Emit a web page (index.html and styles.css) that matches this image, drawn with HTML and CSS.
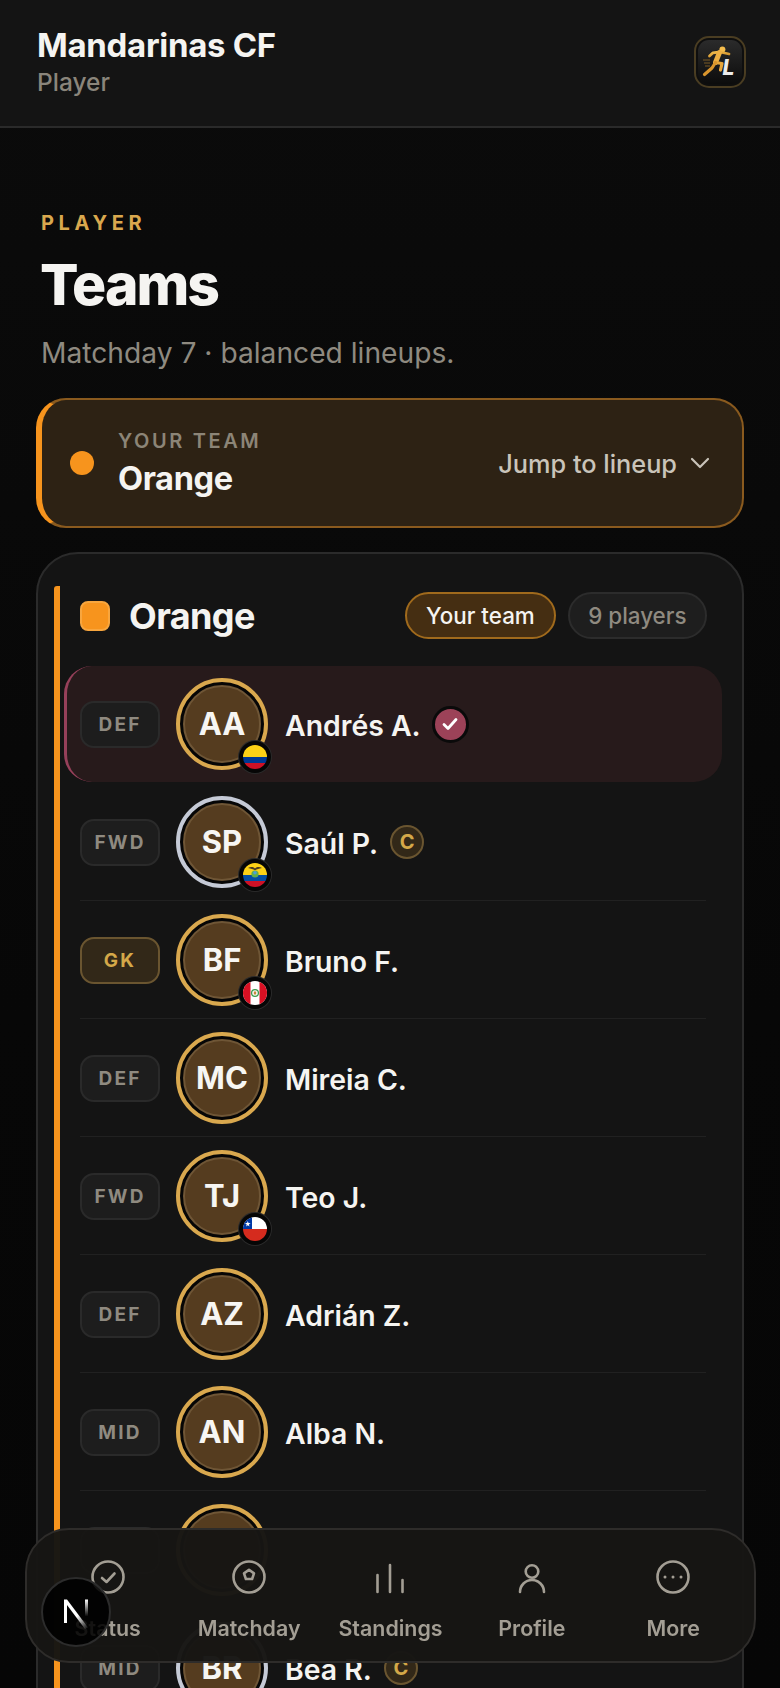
FILE: index.html
```html
<!DOCTYPE html>
<html lang="en">
<head>
  <meta charset="UTF-8" />
  <meta name="viewport" content="width=device-width, initial-scale=1.0"/>
  <title>Mandarinas CF – Teams</title>
  <link rel="stylesheet" href="styles.css">
</head>
<body>

  <header class="topbar">
    <div>
      <div class="club">Mandarinas CF</div>
      <div class="role">Player</div>
    </div>
    <div class="logo">
      <svg width="48" height="48" viewBox="2 2 48 48">
        <defs>
          <linearGradient id="gold" x1="0" y1="0" x2="1" y2="1">
            <stop offset="0" stop-color="#f6c04f"/>
            <stop offset="1" stop-color="#c98a25"/>
          </linearGradient>
          <linearGradient id="plate" x1="0" y1="0" x2="0" y2="1">
            <stop offset="0" stop-color="#2b2b2b"/>
            <stop offset="1" stop-color="#0c0c0c"/>
          </linearGradient>
        </defs>
        <rect x="4" y="4" width="44" height="44" rx="11" fill="url(#plate)"/>
        <circle cx="28.400" cy="13.400" r="3" fill="#f4bc4c"/>
        <path d="M15.500 20 L19 16.800 L26 16 L35 18" fill="none" stroke="url(#gold)" stroke-width="2.800" stroke-linecap="round" stroke-linejoin="round"/>
        <path d="M25.500 16.500 L21.500 26.500" fill="none" stroke="#eeb043" stroke-width="5" stroke-linecap="round"/>
        <path d="M21.500 26.500 L28 27.500 L26.500 34" fill="none" stroke="#e6a53a" stroke-width="3.200" stroke-linecap="round" stroke-linejoin="round"/>
        <path d="M21.500 26.500 L18 32 L10.500 38.500" fill="none" stroke="#d9952d" stroke-width="3.200" stroke-linecap="round" stroke-linejoin="round"/>
        <path d="M9 24h7M10 27h6M11 30h5" stroke="#7a5a24" stroke-width="1"/>
        <text class="logo-l" x="28.600" y="38.600">L</text>
      </svg>
    </div>
  </header>

  <main class="page">
    <div class="intro">
      <div class="eyebrow">PLAYER</div>
      <h1>Teams</h1>
      <p class="lede">Matchday 7 · balanced lineups.</p>
    </div>

    <section class="jump-card">
      <span class="jump-dot"></span>
      <div class="jump-team">
        <div class="jump-label">YOUR TEAM</div>
        <div class="jump-name">Orange</div>
      </div>
      <div class="jump-link">
        Jump to lineup
        <svg width="20" height="12" viewBox="0 0 20 12"><path d="M2 2l8 8 8-8" fill="none" stroke="#c9c4ba" stroke-width="2.200" stroke-linecap="round" stroke-linejoin="round"/></svg>
      </div>
    </section>

    <section class="roster">
      <div class="roster-inner">
        <div class="roster-head">
          <span class="swatch"></span>
          <h2>Orange</h2>
          <span class="pill pill-mine">Your team</span>
          <span class="pill">9 players</span>
        </div>

        <div class="rows">
          <div class="row row-me">
            <span class="pos">DEF</span>
            <div class="avatar"><span class="disc">AA</span>
              <span class="flag">
                <svg viewBox="0 0 24 24"><rect width="24" height="12" fill="#fcd116"/><rect y="12" width="24" height="6" fill="#003893"/><rect y="18" width="24" height="6" fill="#ce1126"/></svg>
              </span>
            </div>
            <span class="name">Andrés A.</span>
            <span class="me-check">
              <svg width="20" height="20" viewBox="0 0 20 20"><path d="M4 10.500l4 4 8-9" fill="none" stroke="#fff" stroke-width="2.800" stroke-linecap="round" stroke-linejoin="round"/></svg>
            </span>
          </div>

          <div class="row">
            <span class="pos">FWD</span>
            <div class="avatar avatar-silver"><span class="disc">SP</span>
              <span class="flag">
                <svg viewBox="0 0 24 24"><rect width="24" height="12" fill="#fcd116"/><rect y="12" width="24" height="6" fill="#034ea2"/><rect y="18" width="24" height="6" fill="#ce1126"/><path d="M5 5c3-1.600 5-1 7 .4 2-1.400 4-2 7-.4-3 .4-5 1.400-7 2.200C10 6.400 8 5.400 5 5z" fill="#4a3a20"/><circle cx="12" cy="11" r="3.600" fill="#5fae4a"/><circle cx="12" cy="9.800" r="1.800" fill="#4aa0d8"/></svg>
              </span>
            </div>
            <span class="name">Saúl P.</span>
            <span class="cap">C</span>
          </div>

          <div class="row">
            <span class="pos pos-gk">GK</span>
            <div class="avatar"><span class="disc">BF</span>
              <span class="flag">
                <svg viewBox="0 0 24 24"><rect width="24" height="24" fill="#fff"/><rect width="7.500" height="24" fill="#d91023"/><rect x="16.500" width="7.500" height="24" fill="#d91023"/><circle cx="12" cy="12" r="3.400" fill="none" stroke="#3c9a4c" stroke-width="1.300"/><rect x="10.800" y="10.500" width="2.400" height="3" fill="#c9893a"/></svg>
              </span>
            </div>
            <span class="name">Bruno F.</span>
          </div>

          <div class="row">
            <span class="pos">DEF</span>
            <div class="avatar"><span class="disc">MC</span></div>
            <span class="name">Mireia C.</span>
          </div>

          <div class="row">
            <span class="pos">FWD</span>
            <div class="avatar"><span class="disc">TJ</span>
              <span class="flag">
                <svg viewBox="0 0 24 24"><rect width="24" height="12" fill="#fff"/><rect y="12" width="24" height="12" fill="#d52b1e"/><rect width="9" height="12" fill="#0039a6"/><path d="M4.800 4l.7 2 2.100.1-1.700 1.300.6 2-1.700-1.200-1.700 1.200.6-2-1.700-1.300 2.100-.1z" fill="#fff"/></svg>
              </span>
            </div>
            <span class="name">Teo J.</span>
          </div>

          <div class="row">
            <span class="pos">DEF</span>
            <div class="avatar"><span class="disc">AZ</span></div>
            <span class="name">Adrián Z.</span>
          </div>

          <div class="row">
            <span class="pos">MID</span>
            <div class="avatar"><span class="disc">AN</span></div>
            <span class="name">Alba N.</span>
          </div>

          <div class="row">
            <span class="pos"></span>
            <div class="avatar"><span class="disc"></span></div>
          </div>

          <div class="row">
            <span class="pos">MID</span>
            <div class="avatar avatar-silver"><span class="disc">BR</span></div>
            <span class="name">Bea R.</span>
            <span class="cap">C</span>
          </div>
        </div>
      </div>
    </section>
  </main>

  <nav class="tabbar">
    <a class="tab">
      <svg class="tab-icon" viewBox="0 0 40 40"><circle cx="20" cy="20" r="15.500"/><path d="M14 21l4.500 4 8-8.500"/></svg>
      <span>Status</span>
    </a>
    <a class="tab">
      <svg class="tab-icon" viewBox="0 0 40 40"><circle cx="20" cy="20" r="15.500"/><path d="M20 12.800l5 3.600-1.900 5.600h-6.200L15 16.400z"/></svg>
      <span>Matchday</span>
    </a>
    <a class="tab">
      <svg class="tab-icon" viewBox="0 0 40 40"><path d="M7.500 18v17M20 8v27M32.500 23v12"/></svg>
      <span>Standings</span>
    </a>
    <a class="tab">
      <svg class="tab-icon" viewBox="0 0 40 40"><circle cx="20" cy="14.500" r="6.300"/><path d="M8 35a12 12 0 0 1 24 0"/></svg>
      <span>Profile</span>
    </a>
    <a class="tab">
      <svg class="tab-icon" viewBox="0 0 40 40"><circle cx="20" cy="20" r="15.500"/><path class="dots" d="M12 20h.01M20 20h.01M28 20h.01"/></svg>
      <span>More</span>
    </a>
  </nav>

  <div class="dev-badge">
    <svg width="36" height="36" viewBox="0 0 36 36">
      <defs>
        <linearGradient id="nfade" x1="0" y1="0" x2="0" y2="1">
          <stop offset="0" stop-color="#fff"/>
          <stop offset="1" stop-color="#fff" stop-opacity="0"/>
        </linearGradient>
        <linearGradient id="ndiag" x1="0" y1="0" x2="1" y2="1">
          <stop offset="0.55" stop-color="#fff"/>
          <stop offset="1" stop-color="#fff" stop-opacity="0"/>
        </linearGradient>
      </defs>
      <path d="M6 5.500h3L30 33.500l-3 1.500L9 11v18H6z" fill="url(#ndiag)"/>
      <rect x="27" y="5.500" width="3" height="17" fill="url(#nfade)"/>
    </svg>
  </div>

</body>
</html>
```

FILE: styles.css
```css
* {
  box-sizing: border-box;
}

html, body {
  margin: 0;
  padding: 0;
  height: 1688px;
  overflow: hidden;
}

body {
  font-family: 'Inter', 'Liberation Sans', sans-serif;
  background: linear-gradient(180deg, #0b0b0b 0%, #070707 60%, #060606 100%);
  color: #f5f4f1;
}

h1, h2, p {
  margin: 0;
}

/* top bar */
.topbar {
  height: 128px;
  padding: 25px 34px 0 37px;
  background: #141414;
  border-bottom: 2px solid #2a2a2a;
  display: flex;
  justify-content: space-between;
}

.club {
  font-size: 33px;
  line-height: 40px;
  font-weight: 700;
  letter-spacing: -0.3px;
}

.role {
  margin-top: 2px;
  font-size: 24.500px;
  line-height: 30px;
  font-weight: 500;
  color: #8a857b;
}

.logo {
  width: 52px;
  height: 52px;
  margin-top: 11px;
  border: 2px solid #4a3d22;
  border-radius: 15px;
  overflow: hidden;
  background: #0e0e0e;
}

.logo-l {
  font-family: 'Inter', sans-serif;
  font-size: 21px;
  font-weight: 800;
  font-style: italic;
  fill: #ececec;
}

/* page */
.page {
  padding: 0 36px;
}

.intro {
  padding: 82px 0 0 5px;
}

.eyebrow {
  font-size: 20px;
  line-height: 26px;
  font-weight: 700;
  letter-spacing: 4.600px;
  color: #d9a84e;
}

h1 {
  margin: 15px 0 0 -1px;
  font-size: 57px;
  line-height: 68px;
  font-weight: 800;
  letter-spacing: -2px;
  color: #f5f4f1;
}

.lede {
  margin-top: 16px;
  font-size: 28.200px;
  line-height: 36px;
  color: #8f8a80;
}

/* your team card */
.jump-card {
  margin-top: 27px;
  height: 130px;
  padding: 0 32px 0 28px;
  display: flex;
  align-items: center;
  background: #2d2214;
  border: 2px solid #8a5a1e;
  border-left: 6px solid #f7941d;
  border-radius: 30px;
}

.jump-dot {
  width: 24px;
  height: 24px;
  border-radius: 50%;
  background: #f7941d;
  flex: none;
}

.jump-team {
  margin-left: 24px;
  flex: 1;
}

.jump-label {
  font-size: 20px;
  line-height: 26px;
  font-weight: 600;
  letter-spacing: 2.600px;
  color: #8c8577;
}

.jump-name {
  margin-top: 4px;
  font-size: 32.600px;
  line-height: 40px;
  font-weight: 700;
  letter-spacing: -0.4px;
}

.jump-link {
  display: flex;
  align-items: center;
  gap: 13px;
  font-size: 25.300px;
  font-weight: 500;
  color: #c9c4ba;
}

/* roster card */
.roster {
  margin-top: 24px;
  padding: 32px 0 0 16px;
  background: #141414;
  border: 2px solid #2b2b2b;
  border-radius: 42px;
  height: 1300px;
}

.roster-inner {
  border-left: 6px solid #f7941d;
  border-top-left-radius: 3px;
  padding: 0 20px 0 4px;
}

.roster-head {
  display: flex;
  align-items: center;
  padding: 7px 15px 0 16px;
  height: 52px;
  margin-bottom: 28px;
}

.swatch {
  width: 30px;
  height: 30px;
  border-radius: 8px;
  background: #f7941d;
  border: 2px solid #f8a63e;
  flex: none;
}

h2 {
  margin-left: 19px;
  flex: 1;
  font-size: 36px;
  line-height: 44px;
  font-weight: 700;
  letter-spacing: -0.6px;
  color: #f5f4f1;
}

.pill {
  height: 47px;
  padding: 0 18.500px;
  margin-left: 12px;
  display: flex;
  align-items: center;
  border-radius: 24px;
  border: 2px solid #2c2c2c;
  background: #1e1e1e;
  font-size: 22.400px;
  font-weight: 500;
  color: #8f8a80;
}

.pill-mine {
  padding: 0 19px;
  background: #452e12;
  border-color: #a06a1c;
  color: #f5f4f1;
}

/* rows */
.rows {
  padding: 0 16px;
}

.row {
  display: flex;
  align-items: center;
  padding: 12px 0;
  margin-bottom: 1px;
  border-bottom: 1px solid #212121;
}

.row-me {
  margin: 0 -16px 2px;
  padding: 12px 16px;
  background: #271a1b;
  border-bottom: none;
  border-left: 3px solid #96405a;
  padding-left: 13px;
  border-radius: 28px;
}

.pos {
  width: 80px;
  height: 47px;
  flex: none;
  display: flex;
  align-items: center;
  justify-content: center;
  border: 2px solid #2a2a2a;
  border-radius: 14px;
  background: #1d1d1d;
  font-size: 19px;
  font-weight: 700;
  letter-spacing: 2.200px;
  color: #8f8a80;
}

.pos-gk {
  background: #322818;
  border-color: #6a5530;
  color: #d4a849;
}

.avatar {
  position: relative;
  width: 92px;
  height: 92px;
  margin-left: 16px;
  flex: none;
  padding: 3px;
  border: 4px solid #d9a84e;
  border-radius: 50%;
  background: #060606;
}

.avatar-silver {
  border-color: #c5cad6;
}

.disc {
  width: 100%;
  height: 100%;
  display: flex;
  align-items: center;
  justify-content: center;
  border-radius: 50%;
  background: #553c1f;
  border: 2px solid #6f5636;
  font-size: 31px;
  font-weight: 700;
  color: #f7f6f3;
  padding-bottom: 2px;
}

.flag {
  position: absolute;
  right: -7px;
  bottom: -7px;
  width: 32px;
  height: 32px;
  border-radius: 50%;
  border: 4px solid #060606;
  box-shadow: 0 0 0 1px #2a2a2a;
  overflow: hidden;
  background: #060606;
}

.flag svg {
  display: block;
  width: 100%;
  height: 100%;
}

.name {
  margin-left: 17px;
  padding-top: 2px;
  font-size: 28.400px;
  font-weight: 600;
  color: #f5f4f1;
}

.cap {
  width: 34px;
  height: 34px;
  margin-left: 12px;
  display: flex;
  align-items: center;
  justify-content: center;
  border-radius: 50%;
  border: 2px solid #6a5530;
  background: #322818;
  font-size: 20px;
  font-weight: 700;
  color: #d4a849;
}

.me-check {
  width: 37px;
  height: 37px;
  margin-left: 11px;
  display: flex;
  align-items: center;
  justify-content: center;
  border-radius: 50%;
  border: 3px solid #0a0a0a;
  background: #9c4258;
}

/* bottom nav */
.tabbar {
  position: fixed;
  left: 25px;
  bottom: 25px;
  width: 731px;
  height: 135px;
  padding: 27px 10px 0;
  display: grid;
  grid-template-columns: repeat(5, 1fr);
  background: rgba(23, 21, 19, 0.975);
  border: 2px solid #2e2c2a;
  border-radius: 44px;
}

.tab {
  display: flex;
  flex-direction: column;
  align-items: center;
  gap: 18px;
  font-size: 21.400px;
  line-height: 26px;
  font-weight: 600;
  color: #a39e94;
}

.tab-icon {
  width: 40px;
  height: 40px;
  fill: none;
  stroke: #a39e94;
  stroke-width: 2.600;
  stroke-linecap: round;
  stroke-linejoin: round;
}

.tab-icon .dots {
  stroke-width: 3;
}

.dev-badge {
  position: fixed;
  left: 41px;
  top: 1577px;
  width: 70px;
  height: 70px;
  display: flex;
  align-items: center;
  justify-content: center;
  border-radius: 50%;
  background: rgba(0, 0, 0, 0.88);
  border: 2px solid #2c2c2c;
}
```
